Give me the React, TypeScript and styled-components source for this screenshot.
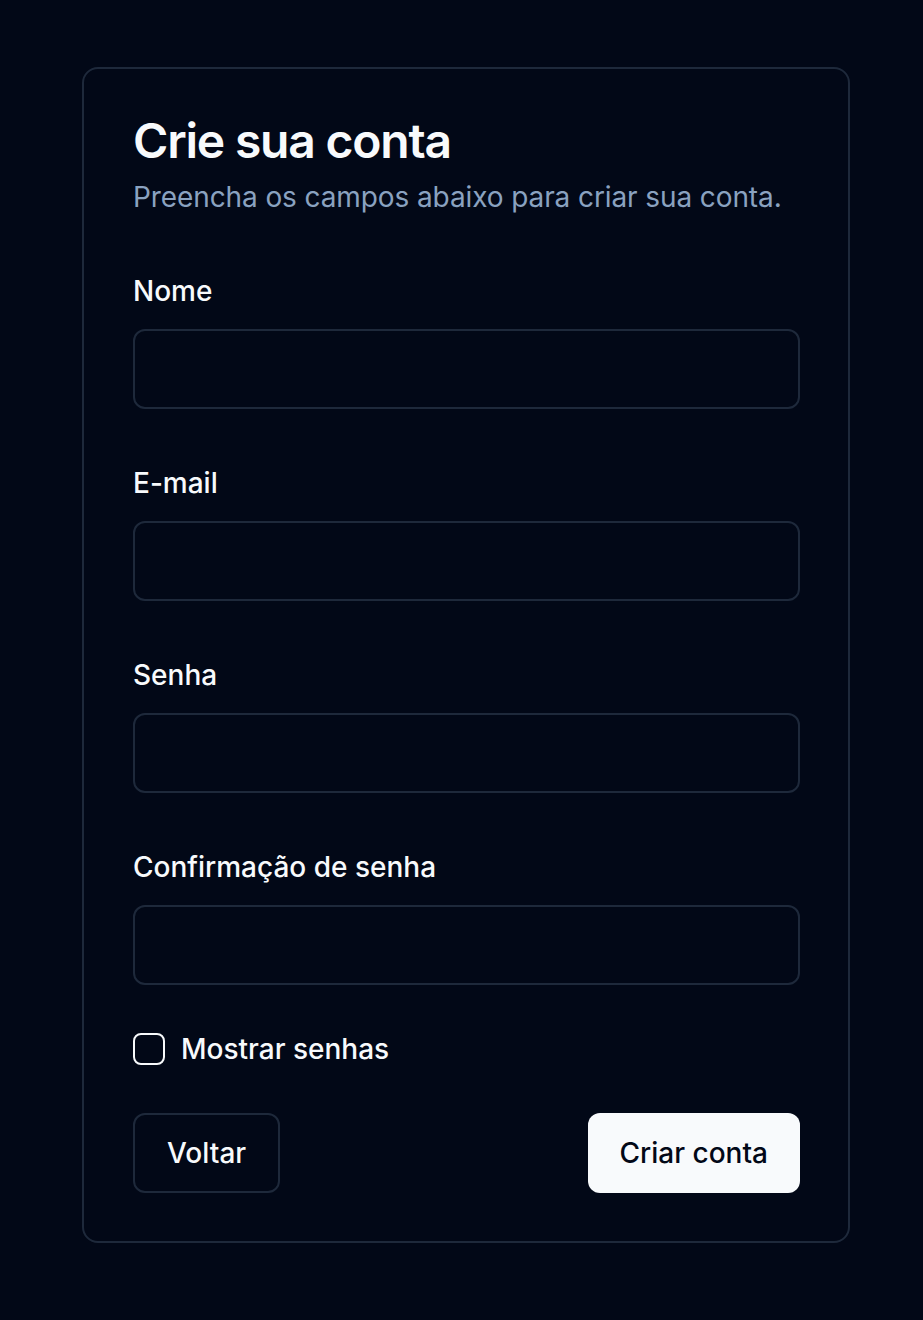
import React, { useState } from "react";
import styled, { createGlobalStyle } from "styled-components";

const Global = createGlobalStyle`
  html, body { margin: 0; padding: 0; background: #020817; }
  body { font-family: Inter, "Noto Sans", sans-serif; color: #f8fafc; -webkit-font-smoothing: antialiased; }
  * { box-sizing: border-box; }
`;

const Page = styled.div`
  min-height: 1320px;
  padding: 67px 0 0 82px;
`;

const Card = styled.div`
  width: 768px;
  border: 2px solid #1e293b;
  border-radius: 16px;
  background: #020817;
`;

const Header = styled.div`
  padding: 48px 48px 48px 49px;
  display: flex;
  flex-direction: column;
  gap: 12px;
`;

const Title = styled.h1`
  margin: 0;
  font-size: 48px;
  line-height: 48px;
  font-weight: 600;
  letter-spacing: -0.025em;
  color: #f8fafc;
`;

const Subtitle = styled.p`
  margin: 0;
  font-size: 28px;
  line-height: 40px;
  letter-spacing: -0.1px;
  color: #8aa2c0;
`;

const Form = styled.form`
  padding: 0 48px 48px 49px;
  display: flex;
  flex-direction: column;
  gap: 48px;
`;

const Field = styled.div`
  padding-top: 12px;
  display: flex;
  flex-direction: column;
  gap: 24px;
`;

const Label = styled.label`
  font-size: 28px;
  line-height: 28px;
  font-weight: 500;
  color: #f8fafc;
`;

const Input = styled.input`
  height: 80px;
  width: 100%;
  border: 2px solid #1e293b;
  border-radius: 12px;
  background: #020817;
  color: #f8fafc;
  font: inherit;
  font-size: 28px;
  padding: 0 24px;
  outline: none;
`;

const CheckRow = styled.label`
  display: flex;
  align-items: center;
  gap: 16px;
  font-size: 28px;
  line-height: 32px;
  font-weight: 500;
  color: #f8fafc;
  cursor: pointer;
`;

const Box = styled.span<{ $checked: boolean }>`
  width: 32px;
  height: 32px;
  border: 2px solid #f8fafc;
  border-radius: 8px;
  background: ${(p) => (p.$checked ? "#f8fafc" : "transparent")};
  display: inline-flex;
  align-items: center;
  justify-content: center;
  flex-shrink: 0;
`;

const Actions = styled.div`
  display: flex;
  justify-content: space-between;
  align-items: center;
`;

const Button = styled.button<{ $primary?: boolean }>`
  height: 80px;
  padding: 0 32px;
  border-radius: 12px;
  font-family: inherit;
  font-size: 28px;
  font-weight: 500;
  cursor: pointer;
  border: ${(p) => (p.$primary ? "none" : "2px solid #1e293b")};
  background: ${(p) => (p.$primary ? "#f8fafc" : "#020817")};
  color: ${(p) => (p.$primary ? "#020817" : "#f8fafc")};
`;

const fields = ["Nome", "E-mail", "Senha", "Confirmação de senha"];

export default function App() {
  const [show, setShow] = useState(false);
  return (
    <>
      <Global />
      <Page>
        <Card>
          <Header>
            <Title>Crie sua conta</Title>
            <Subtitle>Preencha os campos abaixo para criar sua conta.</Subtitle>
          </Header>
          <Form onSubmit={(e) => e.preventDefault()}>
            {fields.map((f) => (
              <Field key={f}>
                <Label>{f}</Label>
                <Input type={f === "Senha" || f.startsWith("Conf") ? (show ? "text" : "password") : "text"} />
              </Field>
            ))}
            <CheckRow onClick={() => setShow(!show)}>
              <Box $checked={show}>
                {show && (
                  <svg width="22" height="22" viewBox="0 0 24 24" fill="none" stroke="#020817" strokeWidth="3" strokeLinecap="round" strokeLinejoin="round">
                    <path d="M20 6 9 17l-5-5" />
                  </svg>
                )}
              </Box>
              Mostrar senhas
            </CheckRow>
            <Actions>
              <Button type="button">Voltar</Button>
              <Button type="submit" $primary>Criar conta</Button>
            </Actions>
          </Form>
        </Card>
      </Page>
    </>
  );
}
